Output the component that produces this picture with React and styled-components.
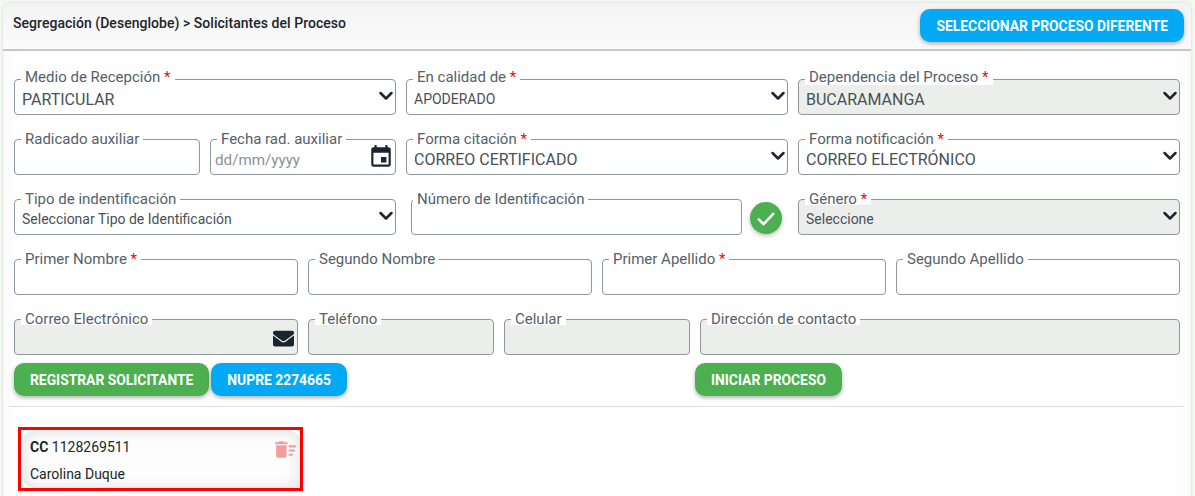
import React from "react";
import styled, { createGlobalStyle } from "styled-components";
import { FaEnvelope } from "react-icons/fa";

const Global = createGlobalStyle`
  html, body { margin: 0; padding: 0; height: 496px; overflow: hidden; background: #fff; }
  body { font-family: Roboto, "Liberation Sans", sans-serif; color: #212529; }
`;

const Page = styled.div`
  padding: 3px 4px 0 3px;
  background: #f1f9f1;
  height: 496px;
  box-sizing: border-box;
  overflow: hidden;
`;
const Card = styled.div`
  background: #fff;
  border-radius: 6px 6px 0 0;
  height: 530px;
  overflow: hidden;
  box-shadow: inset 0 0 20px rgba(0, 0, 0, 0.06), 0 0 3px rgba(0, 0, 0, 0.15);
`;
const Header = styled.div`
  height: 48px;
  box-sizing: border-box;
  display: flex;
  justify-content: space-between;
  align-items: flex-start;
  border-bottom: 2px solid #c6c6c6;
  padding: 6px 7px 0 10px;
  background: linear-gradient(180deg, #f3f3f3 0%, #fbfbfb 100%);
`;
const Title = styled.h1`
  margin: 6px 0 0;
  font-size: 14px;
  line-height: 16px;
  font-weight: 500;
  letter-spacing: 0.04px;
  color: #212529;
`;
const Button = styled.button`
  border: 0;
  border-radius: 10px;
  height: 33px;
  padding: 0 16px;
  background: ${(p) => (p.$green ? "#4caf50" : "#03a9f4")};
  color: #fff;
  font: 700 13.85px Roboto, sans-serif;
  text-transform: uppercase;
  white-space: nowrap;
  box-shadow: 0 2px 4px rgba(0, 0, 0, 0.3);
`;
const Form = styled.div`
  padding: 28px 11px 0;
  display: grid;
  grid-template-columns: repeat(12, 88px);
  column-gap: 10px;
  row-gap: 24px;
`;
const Cell = styled.div`
  grid-column: span ${(p) => p.$span};
  display: flex;
  align-items: center;
  gap: 8px;
  min-width: 0;
  padding: 0 ${(p) => p.$insetRight || 0}px 0 ${(p) => p.$inset || 0}px;
`;
const Field = styled.div`
  position: relative;
  flex: 1;
  height: 36px;
  box-sizing: border-box;
  border: 1px solid #8f979e;
  border-radius: 4px;
  background: ${(p) => (p.$disabled ? "#eceeec" : "#fff")};
  display: flex;
  align-items: center;
  justify-content: space-between;
  padding: 4px 7px 0;
  color: #495057;
  font-size: ${(p) => (p.$small ? 14 : 16)}px;
`;
const Label = styled.label`
  position: absolute;
  left: ${(p) => p.$left}px;
  top: ${(p) => (p.$raised ? -9 : -7)}px;
  padding: 0 4px ${(p) => (p.$raised ? 2 : 0)}px;
  background: #fff;
  font-size: 15px;
  line-height: 12px;
  color: #545f6b;
  white-space: nowrap;
`;
const Req = styled.span`
  color: #f00;
`;
const Placeholder = styled.span`
  color: #8a9299;
  font-size: 15.2px;
  margin-left: -3px;
`;
const Chevron = styled.svg`
  width: 16px;
  height: 16px;
  margin: -7px -6px 0 0;
  fill: none;
  stroke: #1c2530;
  stroke-width: 2.5;
  stroke-linecap: round;
  stroke-linejoin: round;
  flex: none;
`;
const Event = styled.svg`
  width: 26px;
  height: 26px;
  margin: -4px -6px 0 0;
  fill: #1a2330;
  flex: none;
`;
const Mail = styled(FaEnvelope)`
  width: 21px;
  height: 21px;
  margin: -2px -4px 0 0;
  color: #1a2330;
  flex: none;
`;
const CheckBadge = styled.span`
  width: 32px;
  height: 32px;
  border-radius: 50%;
  background: #4caf50;
  display: flex;
  align-items: center;
  justify-content: center;
  flex: none;
  margin-top: 2px;
  box-shadow: 0 2px 4px rgba(0, 0, 0, 0.25);
  svg { width: 22px; height: 22px; fill: none; stroke: #fff; stroke-width: 2.1; }
`;
const Actions = styled.div`
  padding: 8px 11px 0;
  display: grid;
  grid-template-columns: 1fr 1fr;
  height: 33px;
`;
const ButtonGroup = styled.div`
  display: flex;
  gap: 2px;
`;
const RightGroup = styled.div`
  display: flex;
  padding-left: 98px;
`;
const Rule = styled.hr`
  margin: 10px 7px 0 6px;
  border: 0;
  border-top: 1px solid #dedede;
`;
const Applicants = styled.div`
  padding: 20px 15px 0;
`;
const Applicant = styled.div`
  width: 285px;
  height: 64px;
  box-sizing: border-box;
  border: 3px solid #f00;
  background: #fff;
  padding: 1px 0 0 2px;
`;
const ApplicantInner = styled.div`
  height: 57px;
  box-sizing: border-box;
  padding: 8px 6px 0 7px;
  border-radius: 10px 10px 0 10px;
  background: #fdfdfd;
  box-shadow: inset 0 0 14px rgba(0, 0, 0, 0.13);
  font-size: 14px;
  color: #212529;
  position: relative;
`;
const Line = styled.div`
  line-height: 16px;
  margin-bottom: 11px;
  b { font-weight: 700; }
`;
const Trash = styled.svg`
  position: absolute;
  right: 2px;
  top: 6px;
  width: 25px;
  height: 25px;
  fill: #f59d9b;
`;

const ChevronIcon = () => (
  <Chevron viewBox="0 0 16 16"><path d="M2.5 5 8 10.5 13.5 5" /></Chevron>
);

const F = ({ label, req, value, select, small, disabled, raised, labelLeft = 6, children }) => (
  <Field $disabled={disabled} $small={small}>
    <Label $left={labelLeft} $raised={raised}>{label}{req && <> <Req>*</Req></>}</Label>
    <span>{value}</span>
    {select && <ChevronIcon />}
    {children}
  </Field>
);

export default function App() {
  return (
    <Page>
      <Global />
      <Card>
        <Header>
          <Title>Segregación (Desenglobe) &gt; Solicitantes del Proceso</Title>
          <Button>Seleccionar proceso diferente</Button>
        </Header>
        <Form>
          <Cell $span={4}><F raised label="Medio de Recepción" req value="PARTICULAR" select /></Cell>
          <Cell $span={4}><F raised label="En calidad de" req value="APODERADO" select small /></Cell>
          <Cell $span={4}><F raised label="Dependencia del Proceso" req value="BUCARAMANGA" select disabled /></Cell>

          <Cell $span={2}><F label="Radicado auxiliar" /></Cell>
          <Cell $span={2}>
            <F label="Fecha rad. auxiliar" value={<Placeholder>dd/mm/yyyy</Placeholder>}>
              <Event viewBox="0 0 24 24"><path d="M17 12h-5v5h5v-5zM16 1v2H8V1H6v2H5c-1.11 0-1.99.9-1.99 2L3 19c0 1.1.89 2 2 2h14c1.1 0 2-.9 2-2V5c0-1.1-.9-2-2-2h-1V1h-2zm3 18H5V8h14v11z" /></Event>
            </F>
          </Cell>
          <Cell $span={4}><F label="Forma citación" req value="CORREO CERTIFICADO" select /></Cell>
          <Cell $span={4}><F label="Forma notificación" req value="CORREO ELECTRÓNICO" select /></Cell>

          <Cell $span={4}><F label="Tipo de indentificación" value="Seleccionar Tipo de Identificación" select small /></Cell>
          <Cell $span={4} $inset={5} $insetRight={6}>
            <F label="Número de Identificación" labelLeft={1} />
            <CheckBadge>
              <svg viewBox="0 0 18 18"><path d="M2.5 9.5 7 14l8.5-9" /></svg>
            </CheckBadge>
          </Cell>
          <Cell $span={4}><F label="Género" req value="Seleccione" select small disabled /></Cell>

          <Cell $span={3}><F label="Primer Nombre" req /></Cell>
          <Cell $span={3}><F label="Segundo Nombre" /></Cell>
          <Cell $span={3}><F label="Primer Apellido" req /></Cell>
          <Cell $span={3}><F label="Segundo Apellido" /></Cell>

          <Cell $span={3}><F label="Correo Electrónico" disabled><Mail /></F></Cell>
          <Cell $span={2}><F label="Teléfono" disabled /></Cell>
          <Cell $span={2}><F label="Celular" disabled /></Cell>
          <Cell $span={5}><F label="Dirección de contacto" disabled /></Cell>
        </Form>
        <Actions>
          <ButtonGroup>
            <Button $green>Registrar solicitante</Button>
            <Button>NUPRE 2274665</Button>
          </ButtonGroup>
          <RightGroup>
            <Button $green>Iniciar proceso</Button>
          </RightGroup>
        </Actions>
        <Rule />
        <Applicants>
          <Applicant>
            <ApplicantInner>
              <Line><b>CC</b> 1128269511</Line>
              <Line>Carolina Duque</Line>
              <Trash viewBox="0 0 24 24"><path d="M15 16h4v2h-4zm0-8h7v2h-7zm0 4h6v2h-6zM3 18c0 1.1.9 2 2 2h6c1.1 0 2-.9 2-2V8H3v10zM14 5h-3l-1-1H6L5 5H2v2h12z" /></Trash>
            </ApplicantInner>
          </Applicant>
        </Applicants>
      </Card>
    </Page>
  );
}
